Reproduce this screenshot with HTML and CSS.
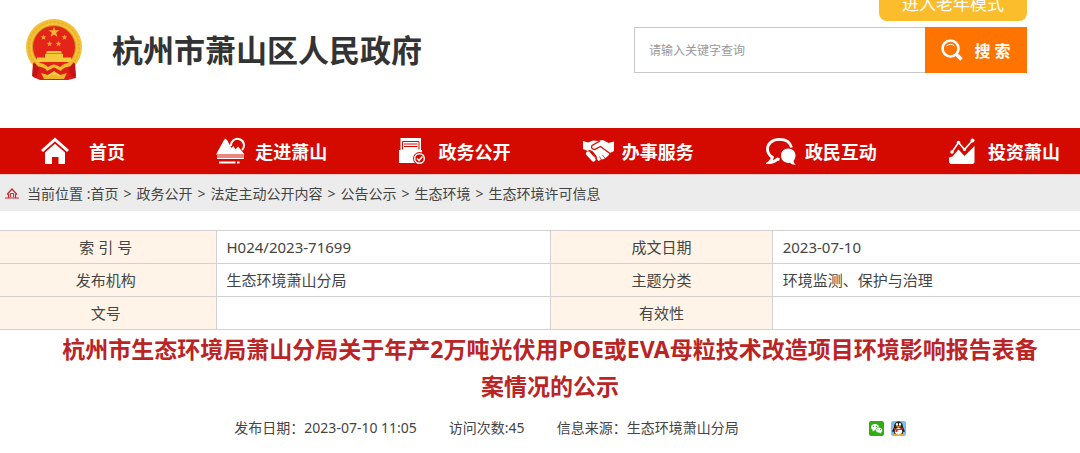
FILE: index.html
```html
<!DOCTYPE html>
<html lang="zh-CN">
<head>
    <meta charset="UTF-8">
    <meta name="viewport" content="width=device-width, initial-scale=1.0">
    <title>杭州市萧山区人民政府</title>
    <link rel="stylesheet" href="styles.css">
</head>
<body>
    <header class="header">
        <a class="brand" href="#">
            <svg class="emblem" viewBox="0 0 56 62" aria-hidden="true">
                <circle cx="28" cy="28" r="28" fill="#f4c238"/>
                <circle cx="28" cy="28" r="25" fill="none" stroke="#eab32c" stroke-width="2" stroke-dasharray="3 1"/>
                <circle cx="28" cy="28" r="22" fill="#d39a1c"/>
                <circle cx="28" cy="28" r="21" fill="#e42319"/>
                <path d="M8 43 Q28 50 48 43 L50 59 L42 61 L14 61 L7 58 Z" fill="#dd1d18"/>
                <path d="M7 44 L14 47 L10 59 L6 57 Z M49 44 L42 47 L46 59 L50 57 Z" fill="#c41414"/>
                <path d="M28 7.500 L29.300 11.300 L33.500 11.300 L30.200 13.800 L31.400 18 L28 15.500 L24.600 18 L25.800 13.800 L22.500 11.300 L26.700 11.300 Z" fill="#f4b52c"/>
                <g fill="#eea329">
                    <path d="M17.500 15.500 l.8 1.800 2 .1 -1.500 1.300 .5 2 -1.800 -1 -1.800 1 .5 -2 -1.500 -1.300 2 -.1 Z"/>
                    <path d="M38.500 15.500 l.8 1.800 2 .1 -1.500 1.300 .5 2 -1.800 -1 -1.800 1 .5 -2 -1.500 -1.300 2 -.1 Z"/>
                    <path d="M23.500 22 l.8 1.800 2 .1 -1.500 1.300 .5 2 -1.800 -1 -1.800 1 .5 -2 -1.500 -1.300 2 -.1 Z"/>
                    <path d="M32.500 22 l.8 1.800 2 .1 -1.500 1.300 .5 2 -1.800 -1 -1.800 1 .5 -2 -1.500 -1.300 2 -.1 Z"/>
                </g>
                <path d="M21 32 H35 L36 34.500 H20 Z M19 35 H37 V38.500 H45 L46 43 H10 L11 38.500 H19 Z" fill="#f6c93b"/>
                <path d="M8 43 Q19 44 22 48 Q28 43 34 48 Q37 44 48 43 L44 47.500 Q37 48 35 52 L31 50 Q28 47 25 50 L21 52 Q19 48 12 47.500 Z" fill="#f3bd2f"/>
                <path d="M15 54 L22 56 L28 52 L34 56 L41 54 L38 60 H18 Z" fill="#f1b42a"/>
                <path d="M22 57 Q28 52 34 57" fill="none" stroke="#fbdc60" stroke-width="1.500"/>
            </svg>
            <span class="brand-name">杭州市萧山区人民政府</span>
        </a>
        <div class="tools">
            <button class="elder" type="button">进入老年模式</button>
            <form class="search">
                <input class="search-input" type="text" placeholder="请输入关键字查询" aria-label="请输入关键字查询">
                <button class="search-btn" type="button">
                    <svg class="search-icon" viewBox="0 0 22 22" fill="none" stroke="#fff" aria-hidden="true">
                        <circle cx="9.500" cy="9.500" r="8" stroke-width="2.600"/>
                        <path d="M5.500 7 Q9.500 3.500 13.500 7" stroke-width="1"/>
                        <path d="M15.500 15.500 L20.500 20.500" stroke-width="3.500"/>
                    </svg>
                    搜 索
                </button>
            </form>
        </div>
    </header>

    <nav class="nav">
        <a class="nav-item nav-home" href="#">
            <svg class="nav-icon" viewBox="0 0 31 28" aria-hidden="true">
                <path d="M1 14 L14 2.500 L27 14" fill="none" stroke="#fff" stroke-width="3"/>
                <path d="M4 15.500 L14 6.800 L24 15.500 V27 H17.500 V20 H11 V27 H4 Z" fill="#fff"/>
            </svg>
            首页
        </a>
        <a class="nav-item" href="#">
            <svg class="nav-icon" viewBox="0 0 31 28" fill="#fff" aria-hidden="true">
                <path d="M15 9 A6.500 6.500 0 1 1 26 13" fill="none" stroke="#fff" stroke-width="2"/>
                <path d="M0 17.500 L8 3 L9.500 1.500 L11 3 L15.500 11 L17.500 9 L19.500 12.500 L22 9.500 L25 13 L28.500 17.500 Z"/>
                <path d="M1 18.500 H28 V19.500 H1 Z M1 20.500 H28 V22 H1 Z M3 24.500 H19.500 V26.500 H3 Z M21 24.500 H23.500 V26.500 H21 Z"/>
            </svg>
            走进萧山
        </a>
        <a class="nav-item" href="#">
            <svg class="nav-icon" viewBox="0 0 31 28" aria-hidden="true">
                <path d="M1.500 1 H22 V13 H23 V26 H0 V13 H1.500 Z" fill="#fff"/>
                <path d="M3.500 12.500 V4.500 H20 V12.500 M5 7 H18.500 M5 9.500 H18.500" fill="none" stroke="#d40a00" stroke-width="1"/>
                <circle cx="20.500" cy="21.500" r="6.500" fill="#d40a00"/>
                <circle cx="20.500" cy="21.500" r="4.800" fill="#d40a00" stroke="#fff" stroke-width="1.400"/>
                <path d="M18 21.500 L20 23.500 L23.500 19.500" fill="none" stroke="#fff" stroke-width="1.600"/>
            </svg>
            政务公开
        </a>
        <a class="nav-item" href="#">
            <svg class="nav-icon" viewBox="0 0 31 28" aria-hidden="true">
                <path d="M0 4 L5 5.500 L10 3.500 L15 4 L20 3 L25.500 6 L31 4.500 V14 L27 16 L25 19 L23.500 20 L21 22 L18.500 22.500 L15.500 24 L12 20 L9 14.500 L4.500 14 L0 12 Z" fill="#fff"/>
                <path d="M17 4 L9 8.500 Q7.500 12 11.500 12.500 L17.500 9.500 L27 16.500" fill="none" stroke="#d40a00" stroke-width="1.300"/>
                <path d="M4 15.500 Q6.500 12 9.500 15 L13 19.500 Q14 22 12 23" fill="none" stroke="#d40a00" stroke-width="1.300"/>
                <path d="M5 16.500 L10.500 22.500" fill="none" stroke="#fff" stroke-width="4.200" stroke-linecap="round"/>
                <path d="M10 16 L13 20" fill="none" stroke="#d40a00" stroke-width="1"/>
                <path d="M16.500 19.500 L18.500 23 M19.500 18 L22 21.500" fill="none" stroke="#d40a00" stroke-width=".8"/>
            </svg>
            办事服务
        </a>
        <a class="nav-item" href="#">
            <svg class="nav-icon" viewBox="0 0 31 28" aria-hidden="true">
                <path d="M25.500 10.500 C24 4.500 19 2.300 13.500 2.300 C6.500 2.300 1.500 6.500 1.500 12 C1.500 16 3.500 18.500 6.500 20.200 C6 22.500 5 24 3 25.500 C7 25.500 9.500 24 11.500 22 L13.500 22.300" fill="none" stroke="#fff" stroke-width="2.800"/>
                <path d="M22 11.500 C26.500 11.500 29.500 14.500 29.500 18.500 C29.500 21 28.500 23 27.500 24 C28 26 28.500 27 30 27.500 C27 28 25 27 24 25.800 C18.500 26.500 15 23 15 18.500 C15 14.500 18 11.500 22 11.500 Z" fill="#fff"/>
            </svg>
            政民互动
        </a>
        <a class="nav-item" href="#">
            <svg class="nav-icon" viewBox="0 0 31 28" fill="#fff" aria-hidden="true">
                <path d="M3 15 L9.500 5.500 L15.500 12.500 L23.500 3.500" fill="none" stroke="#fff" stroke-width="1.600"/>
                <circle cx="3" cy="15" r="1.800"/>
                <circle cx="9.500" cy="5.500" r="1.800"/>
                <circle cx="15.500" cy="12.500" r="1.500"/>
                <circle cx="23.500" cy="3.500" r="2"/>
                <path d="M0 20.500 L3.500 19.500 L9.500 12.500 L15.500 19 L25.500 9 V25.500 L24 27 H1.500 L0 25.500 Z"/>
            </svg>
            投资萧山
        </a>
    </nav>

    <div class="crumbs">
        <svg class="crumb-icon" viewBox="0 0 14 12" fill="none" stroke="#c4262b" aria-hidden="true">
            <path d="M2 7.500 L7 2 L12 7.500" stroke-width="1.200"/>
            <path d="M3.500 7 V10.500 M10.500 7 V10.500 M0 11 H14" stroke-width="1.200"/>
            <path d="M5.500 10 V6.500 H8.500 V10" stroke-width="1"/>
        </svg>
        <span>当前位置 :<a href="#">首页</a></span>
        <span class="sep">&gt;</span>
        <a href="#">政务公开</a>
        <span class="sep">&gt;</span>
        <a href="#">法定主动公开内容</a>
        <span class="sep">&gt;</span>
        <a href="#">公告公示</a>
        <span class="sep">&gt;</span>
        <a href="#">生态环境</a>
        <span class="sep">&gt;</span>
        <a href="#">生态环境许可信息</a>
    </div>

    <table class="info">
        <colgroup>
            <col class="col-name">
            <col class="col-source">
            <col class="col-name2">
            <col>
        </colgroup>
        <tr>
            <th scope="row">索 引 号</th>
            <td>H024/2023-71699</td>
            <th scope="row">成文日期</th>
            <td>2023-07-10</td>
        </tr>
        <tr>
            <th scope="row">发布机构</th>
            <td>生态环境萧山分局</td>
            <th scope="row">主题分类</th>
            <td>环境监测、保护与治理</td>
        </tr>
        <tr>
            <th scope="row">文号</th>
            <td></td>
            <th scope="row">有效性</th>
            <td></td>
        </tr>
    </table>

    <main class="article">
        <h1>杭州市生态环境局萧山分局关于年产2万吨光伏用POE或EVA母粒技术改造项目环境影响报告表备案情况的公示</h1>
        <div class="meta">
            <span>发布日期：2023-07-10 11:05</span>
            <span>访问次数:45</span>
            <span>信息来源：生态环境萧山分局</span>
            <div class="share">
                <a href="#" aria-label="微信">
                    <svg viewBox="0 0 15 15">
                        <rect width="15" height="15" rx="2" fill="#2fae12"/>
                        <path d="M6 3 C8.500 3 10 4.500 10 6.200 C10 8 8.500 9.300 6 9.300 L3.500 10.500 L3.800 8.800 C2.500 8 2 7.200 2 6.200 C2 4.500 3.500 3 6 3 Z" fill="#fff"/>
                        <path d="M10 6.500 C12 6.500 13.500 7.700 13.500 9.200 C13.500 10.200 13 11 12.200 11.500 L12.500 13 L10.500 12 C8 12 6.700 10.800 6.700 9.200 C6.700 7.700 8 6.500 10 6.500 Z" fill="#fff" stroke="#2fae12" stroke-width=".6"/>
                        <path d="M4 5.500 h1 M7 5.500 h1 M8.500 8.700 h1 M11 8.700 h1" stroke="#2fae12" stroke-width="1"/>
                    </svg>
                </a>
                <a href="#" aria-label="QQ">
                    <svg viewBox="0 0 15 15">
                        <rect width="15" height="15" rx="2" fill="#75c0ee"/>
                        <path d="M7.500 .5 C10.500 .5 12 3 12 6 L14 10.500 L12 11 V13 H3 V11 L1 10.500 L3 6 C3 3 4.500 .5 7.500 .5 Z" fill="#222"/>
                        <ellipse cx="7.500" cy="10.300" rx="3.600" ry="3.400" fill="#fff"/>
                        <ellipse cx="6" cy="3.400" rx="1.100" ry="1.400" fill="#fff"/>
                        <ellipse cx="9" cy="3.400" rx="1.100" ry="1.400" fill="#fff"/>
                        <path d="M4.500 5.200 H10.500 L7.500 7 Z M2.500 12.800 H7 V14.500 H2.500 Z M8 12.800 H12.500 V14.500 H8 Z" fill="#f6a91b"/>
                        <path d="M3 7 Q7.500 9 12 7 V8.500 Q9 9.500 6.500 9.300 V11 H4.500 V9 L3 8.500 Z" fill="#e02a22"/>
                    </svg>
                </a>
            </div>
        </div>
    </main>
</body>
</html>
```

FILE: styles.css
```css
body {
    margin: 0;
    font-family: "Noto Sans", "Noto Sans CJK SC", sans-serif;
    font-size: 14px;
    color: #444;
    background: #fff;
}
a {
    color: inherit;
    text-decoration: none;
}
svg {
    display: block;
    flex: none;
}

/* header */
.header {
    display: flex;
    justify-content: space-between;
    align-items: flex-start;
    height: 128px;
    padding: 0 53px 0 26px;
    box-sizing: border-box;
}
.brand {
    display: flex;
    align-items: center;
    gap: 30px;
    padding-top: 19px;
}
.emblem {
    width: 56px;
    height: 62px;
}
.brand-name {
    font-size: 31px;
    line-height: 60px;
    font-weight: bold;
    color: #333;
}
.tools {
    display: flex;
    flex-direction: column;
    align-items: flex-end;
    gap: 6px;
    width: 393px;
}
/* the tab hangs from the top edge of the page */
.elder {
    width: 148px;
    height: 34px;
    margin-top: -13px;
    padding: 0;
    border: 0;
    border-radius: 8px;
    background: #fbbd2c;
    color: #fff;
    font-family: inherit;
    font-size: 17px;
    line-height: 34px;
}
.search {
    display: flex;
    width: 100%;
    height: 46px;
}
.search-input {
    flex: 1;
    min-width: 0;
    padding: 0 14px;
    border: 1px solid #c8c8c8;
    border-right: 0;
    box-sizing: border-box;
    font-family: inherit;
    font-size: 12px;
}
.search-input::placeholder {
    color: #999;
}
.search-btn {
    display: flex;
    align-items: center;
    justify-content: center;
    gap: 11px;
    width: 102px;
    padding: 0;
    border: 0;
    background: #ff7300;
    color: #fff;
    font-family: inherit;
    font-size: 16px;
    font-weight: bold;
}
.search-icon {
    width: 22px;
    height: 22px;
}

/* main navigation */
.nav {
    display: grid;
    grid-template-columns: repeat(5, 17.5%) auto;
    height: 46px;
    padding-left: 33px;
    background: #d40a00;
    border-bottom: 1px solid #e6c9c7;
}
.nav-item {
    display: flex;
    align-items: center;
    gap: 8px;
    color: #fff;
    font-size: 18px;
    font-weight: bold;
    white-space: nowrap;
}
.nav-home {
    gap: 17px;
    padding-left: 8px;
}
.nav-icon {
    width: 31px;
    height: 28px;
}

/* breadcrumb */
.crumbs {
    display: flex;
    align-items: center;
    gap: 5px;
    height: 36px;
    padding-left: 5px;
    background: #ececec;
}
.crumb-icon {
    width: 14px;
    height: 12px;
    margin-right: 3px;
}

/* document info */
.info {
    width: 100%;
    margin-top: 19px;
    table-layout: fixed;
    border-collapse: collapse;
    font-size: 15px;
    line-height: 32px;
}
.col-name {
    width: 20%;
}
.col-source {
    width: 31%;
}
.col-name2 {
    width: 20.5%;
}
.info th,
.info td {
    height: 32px;
    padding: 0 10px;
    border: 1px solid #d2d2d2;
}
.info th {
    background: #fff4e7;
    font-weight: normal;
    text-align: center;
}
.info th:first-child {
    border-left: 0;
}
.info td:last-child {
    border-right: 0;
}
.info th:first-child {
    padding-right: 14px;
}

/* article head */
.article {
    padding: 1px 0 0 20px;
}
.article h1 {
    margin: 0;
    padding: 0 36px;
    color: #bb2424;
    font-size: 23px;
    line-height: 37px;
    text-align: center;
}
.meta {
    display: flex;
    align-items: center;
    justify-content: center;
    gap: 32px;
    padding: 13px 0 14px 40px;
    line-height: 20px;
}
.share {
    display: flex;
    gap: 7px;
    margin-left: 98px;
}
.share svg {
    width: 15px;
    height: 15px;
}
```
